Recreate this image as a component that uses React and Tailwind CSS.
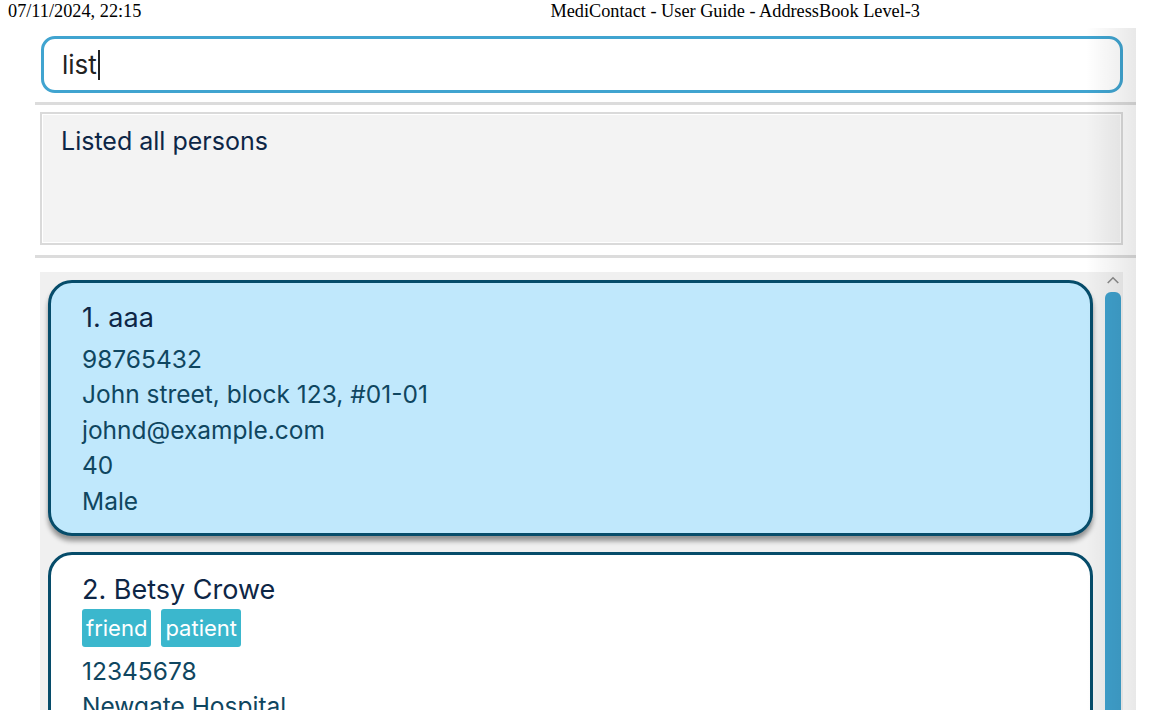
import React from 'react';

const persons = [
  {
    name: '1. aaa',
    tags: [],
    lines: ['98765432', 'John street, block 123, #01-01', 'johnd@example.com', '40', 'Male'],
    selected: true,
  },
  {
    name: '2. Betsy Crowe',
    tags: ['friend', 'patient'],
    lines: ['12345678', 'Newgate Hospital', 'betsycrowe@example.com', '32', 'Female'],
    selected: false,
  },
];

function PersonCard({ person }) {
  return (
    <div
      className={
        person.selected
          ? 'rounded-[24px] border-[3px] border-[#064c6a] bg-[#c0e8fc] px-[31px] pt-[17px] pb-[14px] shadow-[0_5px_5px_rgba(0,0,0,0.4)]'
          : 'rounded-[24px] border-[3px] border-[#064c6a] bg-white px-[31px] pt-[17px] pb-[14px]'
      }
    >
      <div className="mb-[2px] text-[27px] leading-[35px] text-[#0d2646]">{person.name}</div>
      {person.tags.length > 0 && (
        <div className="mb-[7px] flex gap-[10px]">
          {person.tags.map((t) => (
            <span
              key={t}
              className="rounded-[3px] bg-[#3bb7cd] px-[4px] text-[22px] leading-[38px] text-white"
            >
              {t}
            </span>
          ))}
        </div>
      )}
      {person.tags.length === 0 && <div className="h-[5px]" />}
      {person.lines.map((l, i) => (
        <div key={i} className="text-[24.5px] leading-[35.4px] text-[#0f4660]">
          {l}
        </div>
      ))}
    </div>
  );
}

export default function App() {
  return (
    <div className="h-[710px] w-[1167px] overflow-hidden bg-white" style={{ fontFamily: 'Inter, "Noto Sans", sans-serif' }}>
      <div
        className="flex h-[28px] items-start pt-[1px] text-[18.3px] leading-[21px] text-black"
        style={{ fontFamily: '"Liberation Serif", serif' }}
      >
        <span className="ml-[8px]">07/11/2024, 22:15</span>
        <span className="ml-[409px]">MediContact - User Guide - AddressBook Level-3</span>
      </div>

      <div className="relative ml-[35px] w-[1101px]">
        <div className="pt-[8px] pr-[13px] pb-[9px] pl-[6px]">
          <div className="flex h-[57px] items-center rounded-[14px] border-[3px] border-[#40a4d0] bg-white pl-[18px]">
            <span className="text-[26px] text-[#222]">list</span>
            <span className="ml-[1px] h-[30px] w-[2px] bg-[#222]" />
          </div>
        </div>
        <div className="h-[3px] bg-[#dcdcdc]" />
        <div className="pt-[7px] pr-[13px] pb-[10px] pl-[5px]">
          <div className="h-[133px] border-2 border-[#dadada] bg-[#f3f3f3] px-[19px] pt-[8px] shadow-[inset_0_0_0_1px_#fff]">
            <div className="text-[25px] leading-[38px] text-[#0d2646]">Listed all persons</div>
          </div>
        </div>
        <div className="h-[3px] bg-[#dcdcdc]" />
        <div className="pt-[14px] pr-[13px] pl-[5px]">
          <div className="flex h-[460px] bg-[#f0f0f0]">
            <div className="flex flex-1 flex-col gap-[16px] pt-[8px] pl-[8px] pr-[7px]">
              {persons.map((p) => (
                <PersonCard key={p.name} person={p} />
              ))}
            </div>
            <div className="flex w-[23px] flex-col items-end pr-[2px]">
              <svg width="16" height="10" viewBox="0 0 16 10" className="mt-[4px] mr-0">
                <path d="M2 8 L8 2 L14 8" fill="none" stroke="#8a8a8a" strokeWidth="1.8" />
              </svg>
              <div className="mt-[7px] h-[500px] w-[16px] rounded-[6px] bg-[#3fa0cc]" />
            </div>
          </div>
        </div>
        <div className="pointer-events-none absolute top-0 right-0 bottom-0 w-[50px] bg-gradient-to-r from-transparent to-[rgba(0,0,0,0.09)]" />
      </div>
    </div>
  );
}
